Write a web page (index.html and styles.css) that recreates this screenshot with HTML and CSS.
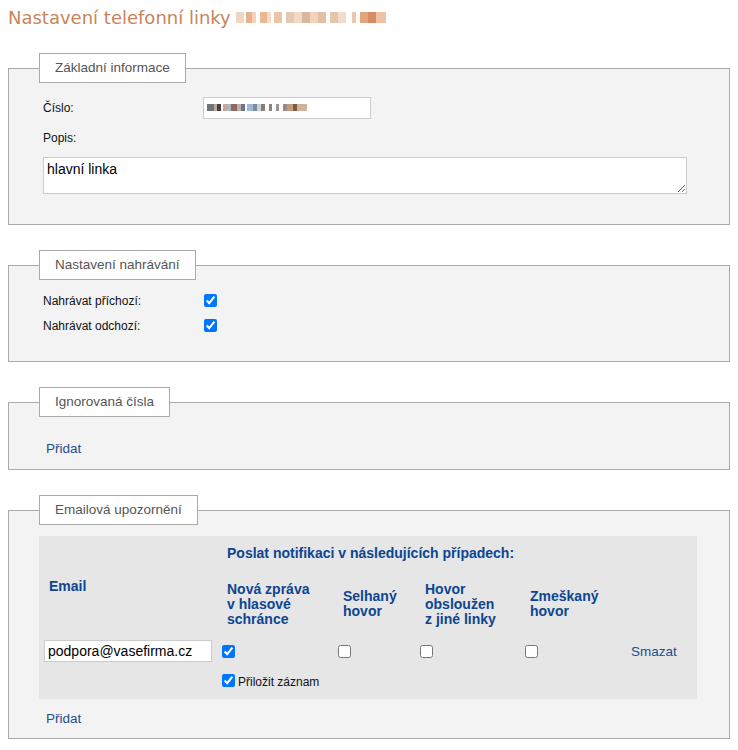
FILE: index.html
```html
<!DOCTYPE html>
<html lang="cs">
<head>
<meta charset="utf-8">
<title>Nastavení telefonní linky</title>
<link rel="stylesheet" href="styles.css">
</head>
<body>
<h1 class="page-title">Nastavení telefonní linky <span class="mosaic mosaic-title"></span></h1>

<fieldset class="box box-basic">
  <legend class="box-legend">Základní informace</legend>
  <div class="field-row first-row">
    <label class="field-label" for="cislo">Číslo:</label>
    <input class="text-input masked" id="cislo" type="text">
  </div>
  <div class="field-row popis-row">
    <label class="field-label" for="popis">Popis:</label>
  </div>
  <textarea class="popis-area" id="popis">hlavní linka</textarea>
</fieldset>

<fieldset class="box box-rec">
  <legend class="box-legend">Nastavení nahrávání</legend>
  <div class="check-rows">
    <div class="check-row">
      <label class="check-label" for="rin">Nahrávat příchozí:</label>
      <input class="check" id="rin" type="checkbox" checked>
    </div>
    <div class="check-row">
      <label class="check-label" for="rout">Nahrávat odchozí:</label>
      <input class="check" id="rout" type="checkbox" checked>
    </div>
  </div>
</fieldset>

<fieldset class="box box-ignored">
  <legend class="box-legend">Ignorovaná čísla</legend>
  <a class="link add-link" href="#">Přidat</a>
</fieldset>

<fieldset class="box box-mail">
  <legend class="box-legend">Emailová upozornění</legend>
  <table class="notif-table">
    <colgroup>
      <col class="c-email">
      <col class="c-vm">
      <col class="c-fail">
      <col class="c-other">
      <col class="c-miss">
      <col class="c-del">
    </colgroup>
    <thead>
      <tr class="head-1">
        <th class="th" rowspan="2">Email</th>
        <th class="th" colspan="5">Poslat notifikaci v následujících případech:</th>
      </tr>
      <tr class="head-2">
        <th class="th">Nová zpráva<br>v hlasové<br>schránce</th>
        <th class="th">Selhaný<br>hovor</th>
        <th class="th">Hovor<br>obsloužen<br>z jiné linky</th>
        <th class="th">Zmeškaný<br>hovor</th>
        <th class="th"></th>
      </tr>
    </thead>
    <tbody>
      <tr class="data-row">
        <td class="td"><input class="text-input mail-input" type="text" value="podpora@vasefirma.cz"></td>
        <td class="td"><input class="check" type="checkbox" checked></td>
        <td class="td"><input class="check" type="checkbox"></td>
        <td class="td"><input class="check" type="checkbox"></td>
        <td class="td"><input class="check" type="checkbox"></td>
        <td class="td td-del"><a class="link" href="#">Smazat</a></td>
      </tr>
      <tr class="attach-row">
        <td class="td"></td>
        <td class="td" colspan="5"><label class="attach"><input class="check" type="checkbox" checked><span class="attach-text">Přiložit záznam</span></label></td>
      </tr>
    </tbody>
  </table>
  <a class="link add-link add-mail" href="#">Přidat</a>
</fieldset>
</body>
</html>
```
FILE: styles.css
```css
html, body {
  background: #fff;
}
body {
  margin: 8px;
  font-family: "Liberation Sans", Arial, sans-serif;
  color: #111;
}
.page-title {
  margin: 0;
  font-family: "DejaVu Sans", Verdana, sans-serif;
  font-weight: normal;
  font-size: 18px;
  line-height: 20px;
  color: #c8845a;
  white-space: nowrap;
}
.mosaic {
  display: inline-block;
  vertical-align: middle;
}
.mosaic-title {
  width: 150px;
  height: 11px;
  margin-top: -3px;
  background:
    linear-gradient(90deg,
      #f0d6c4 0 8px, transparent 8px 10px,
      #e7b08e 10px 16px, #f2d2bb 16px 20px, transparent 20px 24px,
      #e9b894 24px 31px, #f4dccb 31px 35px, transparent 35px 38px,
      #ecc4a8 38px 46px, transparent 46px 50px,
      #e3c8b6 50px 58px, #f1d9c6 58px 66px, #dcb7a0 66px 74px,
      #efd3bd 74px 82px, #e4bfa5 82px 90px, transparent 90px 94px,
      #e7c6ae 94px 102px, #f3dccb 102px 110px, transparent 110px 116px,
      #ebc7ad 116px 120px, transparent 120px 124px,
      #e2a47e 124px 132px, #d98c62 132px 140px, #eec1a2 140px 150px);
}

.box {
  margin: 25px 0 0;
  padding: 0 0 29px 30px;
  border: 1px solid #aaa;
  background: #f3f3f3;
  min-width: 0;
}
.box-basic {
  padding-bottom: 30px;
}
.box-legend {
  padding: 0 15px;
  border: 1px solid #aaa;
  background: #fff;
  font-size: 13.5px;
  line-height: 28px;
  color: #555;
}

.field-row {
  display: flex;
  align-items: center;
  padding-left: 4px;
}
.first-row {
  margin-top: 14px;
}
.popis-row {
  margin-top: 11px;
  height: 16px;
}
.field-label {
  width: 160px;
  font-size: 12px;
  line-height: 16px;
  color: #111;
}
.text-input {
  box-sizing: border-box;
  width: 168px;
  height: 22px;
  margin: 0;
  padding: 0 3px;
  border: 1px solid #ccc;
  background-color: #fff;
  font-family: "Liberation Sans", Arial, sans-serif;
  font-size: 14px;
  color: #000;
  outline: none;
}
.masked {
  background-image: linear-gradient(90deg,
    #6f7478 0 7px, #b4aca3 7px 10px, #4a3c36 10px 14px, transparent 14px 16px,
    #c6a89a 16px 20px, #a7b7c8 20px 24px, #8d6a5c 24px 30px, #b9b1ab 30px 34px,
    #6d757f 34px 38px, transparent 38px 40px, #9eb9d8 40px 46px, #7e8d9e 46px 50px,
    #c9d3dc 50px 54px, #8b7d72 54px 58px, transparent 58px 62px, #8a8580 62px 65px,
    transparent 65px 69px, #9a9590 69px 72px, transparent 72px 76px,
    #9a8a80 76px 80px, #c49a7a 80px 86px, #7c5c48 86px 90px, #d0b29a 90px 100px);
  background-repeat: no-repeat;
  background-size: 100px 7px;
  background-position: 3px 6px;
}
.popis-area {
  display: block;
  box-sizing: border-box;
  width: 644px;
  height: 37px;
  margin: 11px 0 0 4px;
  padding: 2px 3px;
  border: 1px solid #ccc;
  background: #fff;
  font-family: "Liberation Sans", Arial, sans-serif;
  font-size: 14px;
  line-height: 18px;
  color: #000;
  outline: none;
}

.box-rec {
  padding-bottom: 23px;
}
.check-rows {
  margin-top: 8px;
  padding-left: 4px;
}
.check-row {
  display: flex;
  align-items: center;
  height: 25px;
}
.check-label {
  width: 161px;
  font-size: 12px;
  color: #111;
}
.check {
  width: 13px;
  height: 13px;
  margin: 0;
  vertical-align: middle;
}

.link {
  color: #1c4f8e;
  text-decoration: none;
  font-size: 13.5px;
  line-height: 16px;
}
.add-link {
  display: inline-block;
  margin: 24px 0 0 7px;
}
.box-ignored {
  padding-bottom: 12px;
}

.box-mail {
  padding-bottom: 11px;
}
.notif-table {
  margin-top: 11px;
  width: 658px;
  table-layout: fixed;
  border-collapse: collapse;
  background: #e6e6e6;
}
.c-email { width: 178px; }
.c-vm { width: 116px; }
.c-fail { width: 82px; }
.c-other { width: 105px; }
.c-miss { width: 100px; }
.c-del { width: 77px; }
.th {
  padding: 0 0 0 10px;
  text-align: left;
  vertical-align: middle;
  font-size: 14px;
  line-height: 15px;
  font-weight: bold;
  color: #0d4592;
  white-space: nowrap;
}
.head-1 {
  height: 35px;
}
.head-2 {
  height: 66px;
}
.td {
  padding: 0 0 0 5px;
  vertical-align: middle;
}
.data-row {
  height: 28px;
}
.attach-row {
  height: 34px;
}
.td-del {
  padding-left: 11px;
}
.mail-input {
  display: block;
  width: 168px;
  padding: 0 3px;
}
.attach {
  display: inline-flex;
  align-items: center;
}
.attach-text {
  margin-left: 3px;
  font-size: 12px;
  line-height: 14px;
  margin-top: 2px;
  color: #111;
}
.add-mail {
  margin-top: 12px;
}
```
